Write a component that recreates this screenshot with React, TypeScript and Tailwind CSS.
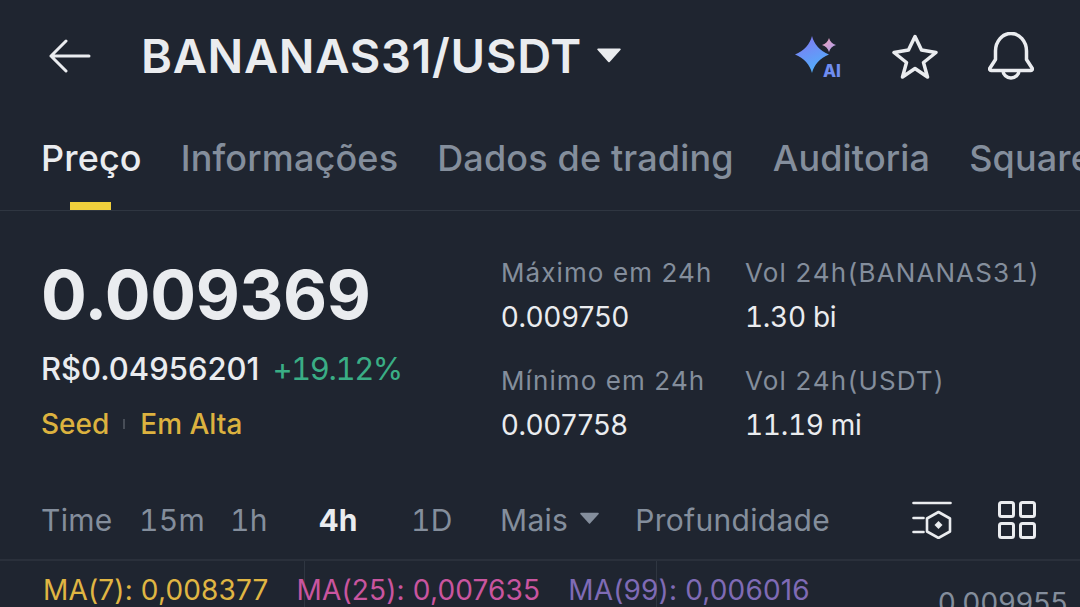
const font = { fontFamily: "Inter, 'Noto Sans', sans-serif" };

function Caret({ className }: { className: string }) {
  return (
    <svg viewBox="0 0 24 16" className={className} fill="currentColor">
      <path d="M1 1.500h22a.8.8 0 0 1 .6 1.300L12.700 15a1 1 0 0 1-1.400 0L.4 2.800A.8.8 0 0 1 1 1.500z" />
    </svg>
  );
}

function BackIcon() {
  return (
    <svg viewBox="0 0 42 34" className="h-[34px] w-[42px]" fill="none" stroke="#eaecef" strokeWidth="3" strokeLinecap="round" strokeLinejoin="round">
      <path d="M40 17H2M17 2L2 17l15 15" />
    </svg>
  );
}

function AiIcon() {
  return (
    <svg viewBox="0 0 47 41" className="h-[41px] w-[47px] overflow-visible">
      <defs>
        <linearGradient id="big" x1="0.2" y1="0" x2="0.6" y2="1">
          <stop offset="0" stopColor="#8278f2" />
          <stop offset="1" stopColor="#4fb0fb" />
        </linearGradient>
        <linearGradient id="small" x1="0" y1="0" x2="1" y2="1">
          <stop offset="0" stopColor="#f2a3b8" />
          <stop offset="1" stopColor="#a99df0" />
        </linearGradient>
      </defs>
      <path d="M17 0C19 8 25 15 34 18.500C25 22 19 29 17 37C15 29 9 22 0 18.500C9 15 15 8 17 0Z" fill="url(#big)" />
      <path d="M34 2C35 5.500 37.500 8 41 9C37.500 10 35 12.500 34 16C33 12.500 30.500 10 27 9C30.500 8 33 5.500 34 2Z" fill="url(#small)" />
      <text x="28" y="41" fontSize="17" fontWeight="800" fill="#6f8df0" style={font}>AI</text>
    </svg>
  );
}

function StarIcon() {
  return (
    <svg viewBox="0 0 46 45" className="h-[45px] w-[46px]" fill="none" stroke="#eaecef" strokeWidth="3.500" strokeLinejoin="round">
      <path d="M23 2.500l6.500 13.500 14.500 2.500-12.500 10 4 14.500L23 34.500 10.500 43l4-14.500L2 18.500l14.500-2.500z" />
    </svg>
  );
}

function BellIcon() {
  return (
    <svg viewBox="0 0 46 48" className="h-[48px] w-[46px]" fill="none" stroke="#eaecef" strokeWidth="3.500" strokeLinejoin="round">
      <path d="M7.500 19a15 17 0 0 1 31 0v8.500l5.500 8.500a1.500 1.500 0 0 1-1.300 2.500H3.300A1.500 1.500 0 0 1 2 36l5.500-8.500z" />
      <path d="M15 38.500a8 7.500 0 0 0 16 0" />
    </svg>
  );
}

function ChartSettingsIcon() {
  return (
    <svg viewBox="0 0 40 38" className="h-[38px] w-[40px]" fill="none" stroke="#eaecef" strokeWidth="2.600">
      <path d="M1.500 2h37" strokeLinecap="round" />
      <path d="M1.500 17h10M1.500 31h10" strokeLinecap="round" />
      <path d="M26.500 11l11.500 6.500v13l-11.500 6.500-11.500-6.500v-13z" strokeLinejoin="round" />
      <path d="M26.500 20l4 4-4 4-4-4z" fill="#eaecef" stroke="none" />
    </svg>
  );
}

function GridIcon() {
  return (
    <svg viewBox="0 0 38 38" className="h-[38px] w-[38px]" fill="none" stroke="#eaecef" strokeWidth="3">
      <rect x="1.500" y="1.500" width="14" height="14" rx="2" />
      <rect x="22.500" y="1.500" width="14" height="14" rx="2" />
      <rect x="1.500" y="22.500" width="14" height="14" rx="2" />
      <rect x="22.500" y="22.500" width="14" height="14" rx="2" />
    </svg>
  );
}

function Stat({ label, value, wide }: { label: string; value: string; wide?: boolean }) {
  return (
    <div className={wide ? "flex flex-col tabular-nums" : "flex flex-col"}>
      <span className="h-[43px] text-[26px] leading-[30px] tracking-[1.1px] text-[#848e9c] whitespace-nowrap">{label}</span>
      <span className={wide ? "text-[28px] leading-[32px] tracking-[-0.3px] text-[#eaecef] whitespace-nowrap" : "text-[28px] leading-[32px] tracking-[0.2px] text-[#eaecef] whitespace-nowrap"}>{value}</span>
    </div>
  );
}

export default function App() {
  const tabs = ["Informações", "Dados de trading", "Auditoria", "Square"];

  return (
    <div style={font} className="flex h-[607px] w-[1080px] flex-col overflow-hidden bg-[#1f2530]">
      {/* Header */}
      <div className="flex h-[112px] shrink-0 items-center pl-[49px] pr-[46px]">
        <BackIcon />
        <span className="ml-[50px] text-[47px] font-semibold tracking-[0.7px] text-[#eaecef]">BANANAS31/USDT</span>
        <Caret className="ml-[15px] mt-[-2px] h-[16px] w-[24px] text-[#eaecef]" />
        <div className="ml-auto flex items-center gap-[50px]">
          <AiIcon />
          <StarIcon />
          <BellIcon />
        </div>
      </div>

      {/* Tabs */}
      <div className="flex h-[99px] shrink-0 gap-[39px] overflow-hidden border-b border-[#2f3641] pl-[41px] pt-[24px] tracking-[0.15px]">
        <div className="relative shrink-0">
          <span className="text-[36px] font-medium leading-[44px] text-[#eaecef]">Preço</span>
          <div className="absolute left-[29px] top-[66px] h-[8px] w-[41px] bg-[#f0cf3c]" />
        </div>
        {tabs.map((tab) => (
          <span key={tab} className="shrink-0 text-[36px] font-medium leading-[44px] text-[#848e9c]">{tab}</span>
        ))}
      </div>

      {/* Price summary */}
      <div className="flex h-[250px] shrink-0 pl-[41px] pt-[47px]">
        <div className="mt-[-4px] w-[460px] shrink-0">
          <div className="text-[68px] font-bold leading-[80px] tracking-[-0.4px] text-[#eaecef]">0.009369</div>
          <div className="mt-[16px] flex items-center gap-[13px] text-[31px] leading-[38px]">
            <span className="font-medium text-[#eaecef]">R$0.04956201</span>
            <span className="tabular-nums tracking-[-1.4px] text-[#3aae85]">+19.12%</span>
          </div>
          <div className="mt-[19px] flex items-center text-[28px] font-medium leading-[34px] text-[#dcb23f]">
            <span>Seed</span>
            <span className="ml-[14px] mr-[15px] h-[10px] w-[2px] bg-[#474d57]" />
            <span>Em Alta</span>
          </div>
        </div>
        <div className="flex w-[244px] shrink-0 flex-col gap-[33px]">
          <Stat label="Máximo em 24h" value="0.009750" />
          <Stat label="Mínimo em 24h" value="0.007758" />
        </div>
        <div className="flex flex-col gap-[33px]">
          <Stat wide label="Vol 24h(BANANAS31)" value="1.30 bi" />
          <Stat wide label="Vol 24h(USDT)" value="11.19 mi" />
        </div>
      </div>

      {/* Interval bar */}
      <div className="flex h-[100px] shrink-0 items-center border-b-2 border-[#2a303b] pt-[22px] pb-[2px] pl-[41px] pr-[44px] text-[30px] tracking-[0.3px] text-[#848e9c] tabular-nums">
        <span className="w-[98px]">Time</span>
        <span className="w-[91px]">15m</span>
        <span className="w-[89px]">1h</span>
        <span className="w-[92px] font-bold text-[#eaecef]">4h</span>
        <span className="w-[89px]">1D</span>
        <span>Mais</span>
        <Caret className="ml-[12px] mt-[-4px] h-[14px] w-[19px] text-[#848e9c]" />
        <span className="ml-[36px]">Profundidade</span>
        <div className="ml-auto flex items-center gap-[46px]">
          <ChartSettingsIcon />
          <GridIcon />
        </div>
      </div>

      {/* Chart legend */}
      <div className="relative flex-1 pl-[43px] pt-[12px] text-[28px] leading-[34px] tracking-[0.15px]">
        <div className="absolute left-[304px] top-0 h-full w-px bg-[#2f3641]" />
        <div className="absolute left-[656px] top-0 h-full w-px bg-[#2f3641]" />
        <div className="relative flex gap-[28px] whitespace-nowrap">
          <span className="text-[#e0b643]">MA(7): 0,008377</span>
          <span className="text-[#c9559f]">MA(25): 0,007635</span>
          <span className="text-[#7f6bb5]">MA(99): 0,006016</span>
        </div>
        <span className="absolute left-[938px] top-[26px] text-[28px] leading-[32px] text-[#848e9c]">0.009955</span>
      </div>
    </div>
  );
}
